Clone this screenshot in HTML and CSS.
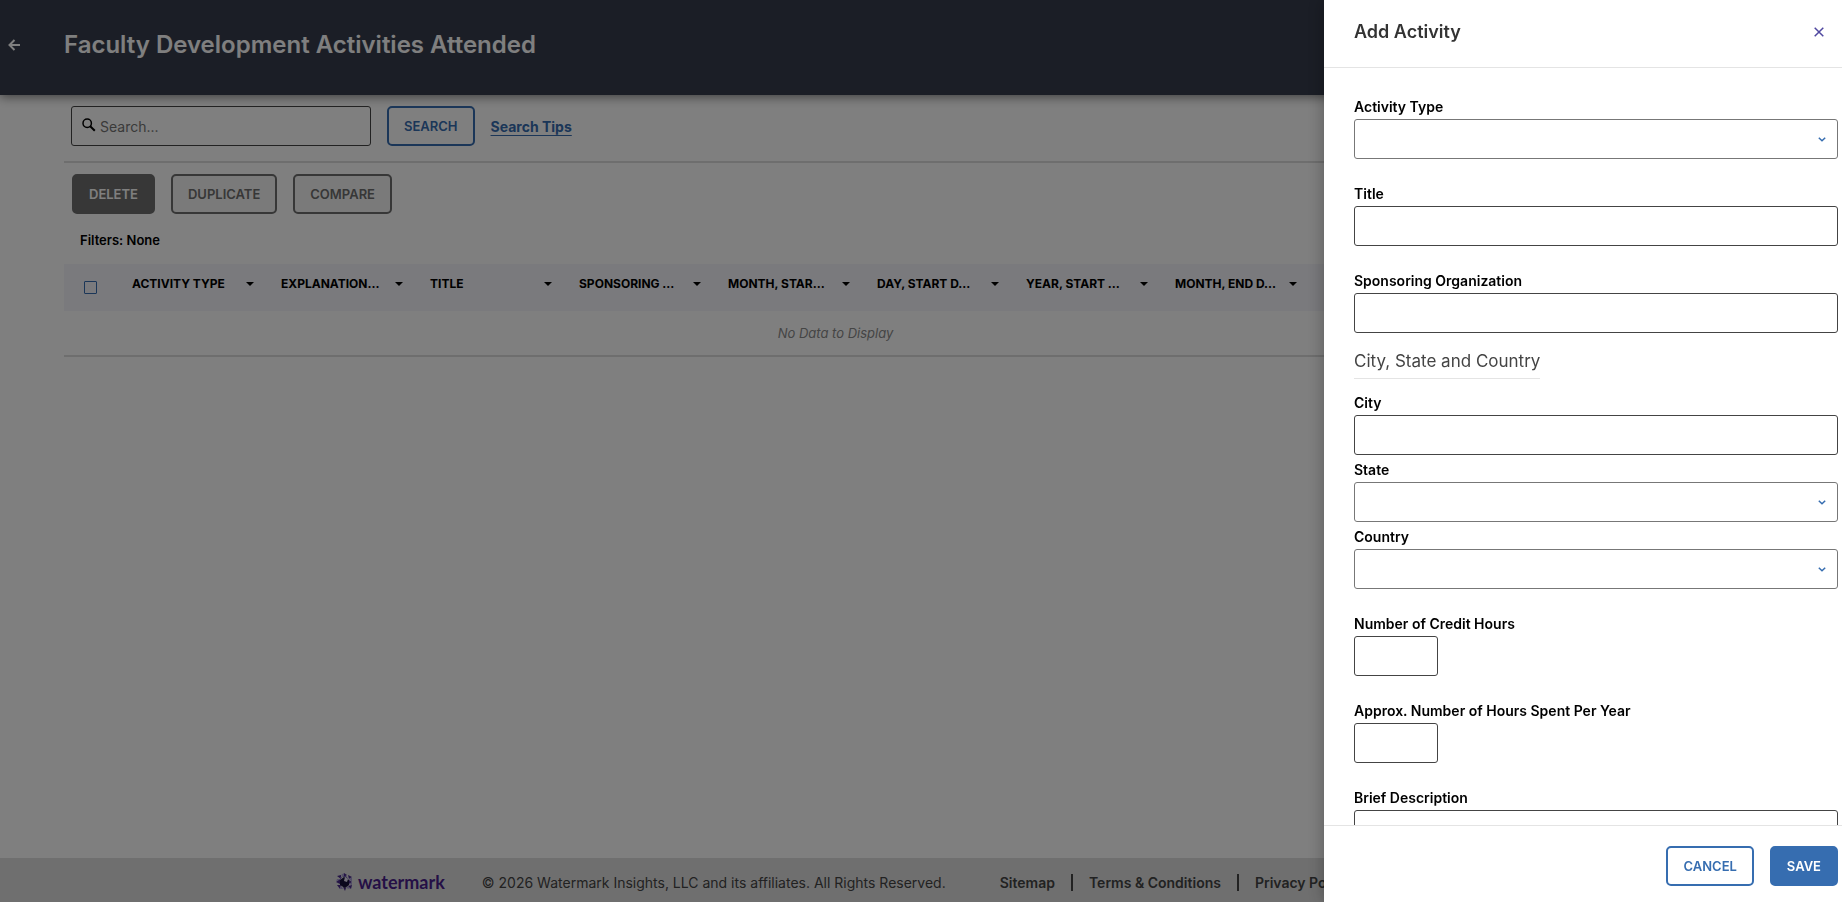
FILE: index.html
```html
<!DOCTYPE html>
<html lang="en">

<head>
    <meta charset="utf-8">
    <title>Faculty Development Activities Attended</title>
    <link rel="stylesheet" href="styles.css">
</head>

<body>
    <div class="page">
        <header class="topbar">
            <button type="button" class="back" aria-label="Back">
                <svg width="12" height="12" viewBox="0 0 12 12" fill="none" stroke="currentColor" stroke-width="2">
                    <path d="M12 6H1.5M6.5 1L1.5 6l5 5" />
                </svg>
            </button>
            <h1>Faculty Development Activities Attended</h1>
        </header>

        <main class="content">
            <form class="search" action="#">
                <div class="searchbox">
                    <svg width="14" height="16" viewBox="0 0 14 16" fill="none" stroke="#000">
                        <circle cx="5.2" cy="5.2" r="4.2" stroke-width="1.5" />
                        <path d="M8.2 8.2l4.6 4.6" stroke-width="2" />
                    </svg>
                    <input type="text" placeholder="Search..." aria-label="Search">
                </div>
                <button type="submit" class="btn">Search</button>
                <a href="#" class="tips">Search Tips</a>
            </form>

            <div class="actions">
                <button type="button" class="btn gray-full">Delete</button>
                <button type="button" class="btn gray">Duplicate</button>
                <button type="button" class="btn gray">Compare</button>
            </div>
            <p class="filters">Filters: None</p>

            <table class="grid">
                <thead>
                    <tr>
                        <th class="check"><input type="checkbox" aria-label="Select all"></th>
                        <th><div class="col">ACTIVITY TYPE<i class="caret"></i></div></th>
                        <th><div class="col">EXPLANATION…<i class="caret"></i></div></th>
                        <th><div class="col">TITLE<i class="caret"></i></div></th>
                        <th><div class="col">SPONSORING …<i class="caret"></i></div></th>
                        <th><div class="col">MONTH, STAR…<i class="caret"></i></div></th>
                        <th><div class="col">DAY, START D…<i class="caret"></i></div></th>
                        <th><div class="col">YEAR, START …<i class="caret"></i></div></th>
                        <th><div class="col">MONTH, END D…<i class="caret"></i></div></th>
                        <th></th>
                        <th></th>
                    </tr>
                </thead>
                <tbody>
                    <tr>
                        <td colspan="11">No Data to Display</td>
                    </tr>
                </tbody>
            </table>
        </main>

        <footer class="footer">
            <div class="logo">
                <svg width="17" height="18" viewBox="0 0 17 18">
                    <path fill="#4a2a8c" d="M8 0l3 2-3 2zM1 3l4-1v4zM12 2l4 2-3 2zM0 9l4-3v5zM1 12l4 0-1 4zM7 14l3 1-1 3zM12 13l4-1-1 4zM13 7l3 2-3 2z" />
                    <path fill="#a59ad0" d="M5 2l3-2v4zM1 6l3 0-4 3zM13 6l3-2v5zM13 11l3-2v3zM5 12l2 4-3 0zM10 15l2-2 2 3z" />
                    <path fill="#6d5bb0" d="M5 3l4 1 4 3-3-4zM4 7l2-3-2 0z" />
                    <path fill="#17103a" d="M8 4l5 3v5l-4 3-5-3V7z" />
                    <path fill="#e6e0f4" d="M9 4l3 2-1 3-3-1z" />
                </svg>
                <span>watermark</span>
            </div>
            <p>© 2026 Watermark Insights, LLC and its affiliates. All Rights Reserved.</p>
            <nav class="links">
                <a href="#">Sitemap</a>
                <a href="#">Terms &amp; Conditions</a>
                <a href="#">Privacy Policy</a>
            </nav>
        </footer>
    </div>

    <div class="overlay"></div>

    <form class="drawer" action="#">
        <div class="drawer-head">
            <h2>Add Activity</h2>
            <button type="button" class="close" aria-label="Close">
                <svg width="10" height="10" viewBox="0 0 10 10" fill="none" stroke="currentColor" stroke-width="1.5">
                    <path d="M.7.7l8.6 8.6M9.3.7L.7 9.3" />
                </svg>
            </button>
        </div>

        <div class="drawer-body">
            <div class="field">
                <label for="type">Activity Type</label>
                <div class="select">
                    <select id="type"></select>
                    <svg width="8" height="5" viewBox="0 0 8 5"><path d="M.8.8L4 3.8 7.2.8" /></svg>
                </div>
            </div>
            <div class="field">
                <label for="title">Title</label>
                <input type="text" id="title">
            </div>
            <div class="field">
                <label for="org">Sponsoring Organization</label>
                <input type="text" id="org">
            </div>
            <fieldset class="place">
                <legend>City, State and Country</legend>
                <div class="field">
                    <label for="city">City</label>
                    <input type="text" id="city">
                </div>
                <div class="field">
                    <label for="state">State</label>
                    <div class="select">
                        <select id="state"></select>
                        <svg width="8" height="5" viewBox="0 0 8 5"><path d="M.8.8L4 3.8 7.2.8" /></svg>
                    </div>
                </div>
                <div class="field">
                    <label for="country">Country</label>
                    <div class="select">
                        <select id="country"></select>
                        <svg width="8" height="5" viewBox="0 0 8 5"><path d="M.8.8L4 3.8 7.2.8" /></svg>
                    </div>
                </div>
            </fieldset>
            <div class="field">
                <label for="credit">Number of Credit Hours</label>
                <input type="text" id="credit" class="short">
            </div>
            <div class="field">
                <label for="hours">Approx. Number of Hours Spent Per Year</label>
                <input type="text" id="hours" class="short">
            </div>
            <div class="field">
                <label for="desc">Brief Description</label>
                <textarea id="desc"></textarea>
            </div>
        </div>

        <div class="drawer-foot">
            <button type="button" class="btn">Cancel</button>
            <button type="submit" class="btn full">Save</button>
        </div>
    </form>
</body>

</html>
```
FILE: styles.css
```css
* {
    box-sizing: border-box;
}

body {
    margin: 0;
    font-family: Inter, "Liberation Sans", sans-serif;
    font-size: 14px;
    color: #000;
    background: #fff;
}

h1, h2, p {
    margin: 0;
}

input, select, textarea, button {
    font-family: inherit;
}

.page {
    display: flex;
    flex-direction: column;
    height: 100vh;
    overflow: hidden;
}

/* top bar */
.topbar {
    display: flex;
    align-items: flex-start;
    height: 95px;
    padding: 28px 8px;
    color: #fff;
    background: #363c4c;
    box-shadow: 0 2px 10px rgba(0, 0, 0, 0.5);
}

.topbar h1 {
    margin-left: 44px;
    font-size: 24px;
    font-weight: 600;
    line-height: 34px;
}

.back {
    display: flex;
    align-items: center;
    height: 34px;
    padding: 0;
    border: none;
    color: inherit;
    background: none;
}

/* buttons */
.btn {
    height: 40px;
    padding: 0 15px;
    border: 2px solid #366db0;
    border-radius: 5px;
    font-size: 13px;
    font-weight: 600;
    text-transform: uppercase;
    color: #366db0;
    background: #fff;
}

.full {
    color: #fff;
    background: #366db0;
}

.gray {
    border-color: #6e6e6e;
    color: #6e6e6e;
    background: #f5f5f5;
}

.gray-full {
    border-color: #6e6e6e;
    color: #fff;
    background: #6e6e6e;
}

/* list */
.content {
    flex: 1;
    margin-left: 64px;
}

.search {
    display: flex;
    align-items: center;
    gap: 16px;
    padding: 11px 7px 15px;
    border-bottom: 2px solid #dcdcdc;
}

.searchbox {
    display: flex;
    align-items: center;
    gap: 4px;
    width: 300px;
    height: 40px;
    padding: 0 10px;
    border: 1px solid #444;
    border-radius: 3px;
}

.searchbox input {
    flex: 1;
    border: none;
    outline: none;
    padding: 0;
    font-size: 14px;
    background: none;
}

.searchbox input::placeholder {
    color: #757575;
}

.tips {
    font-weight: 700;
    color: #366db0;
    text-underline-offset: 3px;
}

.actions {
    display: flex;
    gap: 16px;
    padding: 11px 8px;
}

.filters {
    padding: 5px 16px 14px;
    font-size: 13px;
    font-weight: 600;
    line-height: 20px;
}

.grid {
    width: 1543px;
    table-layout: fixed;
    border-collapse: collapse;
}

.grid th {
    width: 149px;
    height: 47px;
    padding: 0 12px 0 15px;
    text-align: left;
    font-size: 12px;
    font-weight: 700;
    background: #f5f5fa;
}

.grid .check {
    width: 53px;
    padding: 0 20px;
}

.check input {
    display: block;
    appearance: none;
    width: 13px;
    height: 13px;
    margin: 0;
    border: 1px solid #366db0;
    border-radius: 1px;
}

.col {
    display: flex;
    align-items: center;
    justify-content: space-between;
    height: 31px;
    padding-bottom: 8px;
    box-sizing: content-box;
    white-space: nowrap;
}

.caret {
    border: 4px solid transparent;
    border-top-color: #000;
    border-bottom: none;
}

.grid td {
    height: 45px;
    text-align: center;
    font-style: italic;
    font-size: 13px;
    color: #8a8a8a;
    border-bottom: 2px solid #dcdcdc;
}

/* footer */
.footer {
    display: flex;
    align-items: center;
    height: 44px;
    padding: 4px 0 0 336px;
    white-space: nowrap;
    color: #444;
    background: #dfdfdf;
}

.logo {
    display: flex;
    align-items: center;
    gap: 5px;
    margin-right: 37px;
    font-family: Lato, sans-serif;
    font-size: 18px;
    font-weight: 700;
    line-height: 20px;
    color: #4b1f8c;
}

.links {
    display: flex;
    margin-left: 38px;
}

.links a {
    padding: 0 16px;
    font-weight: 600;
    line-height: 17px;
    color: #444;
    text-decoration: none;
}

.links a + a {
    border-left: 2px solid #444;
}

/* drawer */
.overlay {
    position: fixed;
    inset: 0;
    background: rgba(0, 0, 0, 0.5);
}

.drawer {
    position: fixed;
    top: 0;
    right: 0;
    bottom: 0;
    display: flex;
    flex-direction: column;
    width: 518px;
    background: #fff;
    box-shadow: 0 0 16px rgba(0, 0, 0, 0.3);
}

.drawer-head {
    display: flex;
    align-items: center;
    justify-content: space-between;
    height: 68px;
    padding: 0 18px 4px 30px;
    border-bottom: 1px solid #e4e4e4;
}

.drawer-head h2 {
    font-size: 18px;
    font-weight: 600;
    color: #333;
}

.close {
    display: flex;
    padding: 0;
    border: none;
    color: #5048a0;
    background: none;
}

.drawer-body {
    flex: 1;
    min-height: 0;
    overflow: hidden;
    padding: 29px 4px 0 30px;
}

.field {
    display: flex;
    flex-direction: column;
    margin-bottom: 25px;
}

.field label {
    margin-bottom: 2px;
    font-weight: 600;
    line-height: 20px;
}

.field input,
.field textarea,
.select select {
    width: 100%;
    height: 40px;
    padding: 0 10px;
    border: 1px solid #444;
    border-radius: 3px;
    font-size: 14px;
    background: #fff;
}

.field textarea {
    display: block;
    height: 100px;
    resize: none;
}

.field .short {
    width: 84px;
}

.select {
    position: relative;
}

.select select {
    display: block;
    appearance: none;
    border-color: #777;
}

.select svg {
    position: absolute;
    top: 18px;
    right: 12px;
    fill: none;
    stroke: #366db0;
    stroke-width: 1.5;
    pointer-events: none;
}

.place {
    margin: -9px 0 20px;
    padding: 0;
    border: none;
}

.place legend {
    margin-bottom: 14px;
    padding: 0 0 5px;
    border-bottom: 1px solid #e4e4e4;
    font-size: 17px;
    line-height: 24px;
    color: #444;
}

.place .field {
    margin-bottom: 5px;
}

.drawer-foot {
    display: flex;
    justify-content: flex-end;
    gap: 16px;
    height: 77px;
    padding: 20px 4px;
    border-top: 1px solid #e4e4e4;
}
```
